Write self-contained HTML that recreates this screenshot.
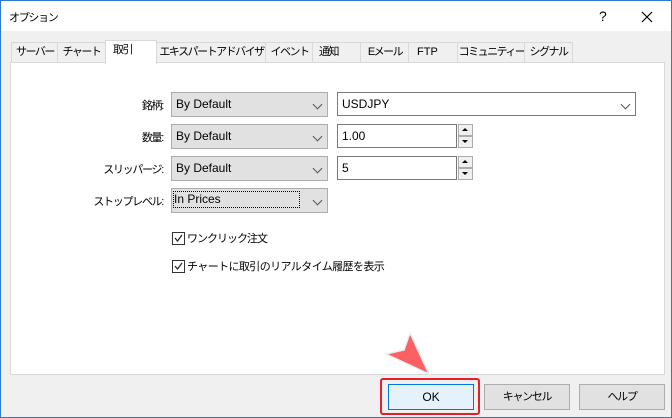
<!DOCTYPE html><html><head><meta charset="utf-8"><style>
body{margin:0;width:672px;height:418px;overflow:hidden;font-family:"Liberation Sans","Noto Sans CJK JP",sans-serif;font-size:12px;color:#000;}
.win{position:absolute;left:0;top:0;width:670px;height:416px;border:1px solid #2b7bd0;background:#f0f0f0;}
.title{position:absolute;left:0;top:0;width:670px;height:30px;background:#fff;}
.abs{position:absolute;white-space:nowrap;}
.j{font-size:11px;letter-spacing:-1.3px;}
.tab{position:absolute;top:41px;height:19px;border:1px solid #d9d9d9;border-bottom:none;background:#f0f0f0;line-height:19px;text-align:center;font-size:11px;letter-spacing:-1.5px;white-space:nowrap;overflow:hidden;}
.panel{position:absolute;left:9px;top:61px;width:653px;height:311px;background:#fff;border:1px solid #d9d9d9;}
.combo{position:absolute;width:155px;height:23px;background:#e1e1e1;border:1px solid #adadad;line-height:23px;}
.combo span{position:absolute;left:4px;}
.chev{position:absolute;right:6px;top:8px;width:6px;height:6px;border-right:1px solid #555;border-bottom:1px solid #555;transform:rotate(45deg);}
.edit{position:absolute;height:22px;background:#fff;border:1px solid #7a7a7a;line-height:22px;}
.edit span{position:absolute;left:4px;}
.spin{position:absolute;width:13px;height:10px;background:#f0f0f0;border:1px solid #adadad;}
.lbl{position:absolute;text-align:right;width:160px;left:2px;font-size:11px;letter-spacing:-1.3px;white-space:nowrap;}
.btn{position:absolute;top:383px;width:84px;height:24px;background:#e1e1e1;border:1px solid #adadad;text-align:center;line-height:24px;white-space:nowrap;}
.cb{position:absolute;left:171px;width:11px;height:11px;border:1px solid #333;background:#fff;}
</style></head><body>
<div class="win">
<div class="title"></div>
<div class="abs j" style="left:8px;top:8px;">オプション</div>
<div class="abs" style="left:598px;top:7px;font-size:14px;">?</div>
<svg class="abs" style="left:640px;top:10px" width="12" height="12"><path d="M1 1L11 11M11 1L1 11" stroke="#000" stroke-width="1.2"/></svg>
<div class="panel"></div>
<div class="tab" style="left:10px;width:46px">サーバー</div>
<div class="tab" style="left:56px;width:47px">チャート</div>
<div class="tab" style="left:104px;top:39px;height:23px;background:#fff;text-align:left;padding-left:7px;width:43px;">取引</div>
<div class="tab" style="left:155px;width:109px">エキスパートアドバイザ</div>
<div class="tab" style="left:264px;width:47px">イベント</div>
<div class="tab" style="left:311px;text-align:left;padding-left:6px;width:42px">通知</div>
<div class="tab" style="left:359px;width:48px">Eメール</div>
<div class="tab" style="left:407px;text-align:left;padding-left:8px;width:41px;letter-spacing:0">FTP</div>
<div class="tab" style="left:456px;width:67px">コミュニティー</div>
<div class="tab" style="left:523px;width:47px">シグナル</div>

<div class="lbl" style="top:96px">銘柄:</div>
<div class="lbl" style="top:128px">数量:</div>
<div class="lbl" style="top:160px">スリッパージ:</div>
<div class="lbl" style="top:192px">ストップレベル:</div>
<div class="combo" style="left:170px;top:91px"><span>By Default</span><div class="chev"></div></div>
<div class="combo" style="left:170px;top:123px"><span>By Default</span><div class="chev"></div></div>
<div class="combo" style="left:170px;top:155px"><span>By Default</span><div class="chev"></div></div>
<div class="combo" style="left:170px;top:187px"><span style="left:2px;top:3px;height:15px;line-height:15px;outline:1px dotted #000;padding-right:78px">In Prices</span><div class="chev"></div></div>
<div class="edit" style="left:336px;top:91px;width:297px"><span>USDJPY</span><div class="chev"></div></div>
<div class="edit" style="left:336px;top:123px;width:118px"><span>1.00</span></div>
<div class="spin" style="left:457px;top:123px"></div><div class="spin" style="left:457px;top:135px"></div>
<div class="abs" style="left:461px;top:127px;border:3px solid transparent;border-bottom:3px solid #000;border-top:none"></div>
<div class="abs" style="left:461px;top:139px;border:3px solid transparent;border-top:3px solid #000;border-bottom:none"></div>
<div class="edit" style="left:336px;top:155px;width:118px"><span>5</span></div>
<div class="spin" style="left:457px;top:155px"></div><div class="spin" style="left:457px;top:167px"></div>
<div class="abs" style="left:461px;top:159px;border:3px solid transparent;border-bottom:3px solid #000;border-top:none"></div>
<div class="abs" style="left:461px;top:171px;border:3px solid transparent;border-top:3px solid #000;border-bottom:none"></div>

<div class="cb" style="top:231px"><svg width="11" height="11"><path d="M2 5L4.5 8L9 2" stroke="#222" fill="none" stroke-width="1.2"/></svg></div>
<div class="abs j" style="left:186px;top:229px;letter-spacing:-1px">ワンクリック注文</div>
<div class="cb" style="top:259px"><svg width="11" height="11"><path d="M2 5L4.5 8L9 2" stroke="#222" fill="none" stroke-width="1.2"/></svg></div>
<div class="abs j" style="left:186px;top:257px;letter-spacing:-0.6px">チャートに取引のリアルタイム履歴を表示</div>

<div class="abs" style="left:379px;top:377px;width:96px;height:33px;border:2px solid #e5202a;border-radius:3px"></div>
<div class="btn" style="left:387px;background:#e5f1fb;border-color:#0078d7">OK</div>
<div class="btn j" style="left:483px">キャンセル</div>
<div class="btn j" style="left:578px">ヘルプ</div>
<svg class="abs" style="left:370px;top:325px" width="70" height="60"><path d="M39 7L58 48L15 28L33 24Z" fill="#fb6064" stroke="#eee" stroke-width="1.5"/></svg>
</div>
</body></html>
